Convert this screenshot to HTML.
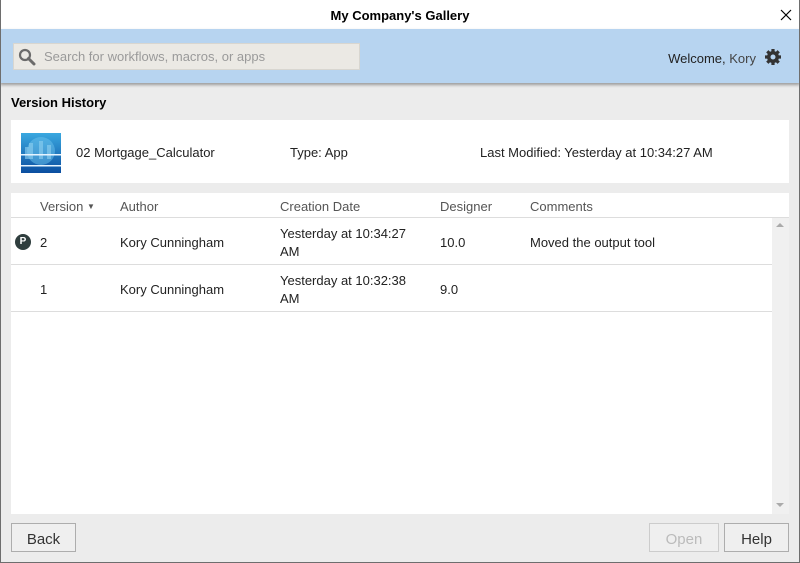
<!DOCTYPE html>
<html><head><style>
*{margin:0;padding:0;box-sizing:border-box}
body{width:800px;height:563px;overflow:hidden;font-family:"Liberation Sans",sans-serif;font-size:13px;color:#222;background:#ececec;position:relative}
.frame{position:absolute;left:0;top:0;width:800px;height:563px;border:1px solid #6e6e6e;border-top:none;pointer-events:none}
.abs{position:absolute}
.title{left:0;top:0;width:800px;height:29px;background:#fff;text-align:center;font-weight:bold;font-size:13px;line-height:32px;color:#000}
.hdr{left:0;top:29px;width:800px;height:54px;background:#b7d4f0;box-shadow:0 2px 3px rgba(0,0,0,.35)}
.search{left:13px;top:43px;width:347px;height:27px;background:#ebe9e4;border:1px solid #d8d6d0;color:#9a9a9a;font-size:13px;line-height:26px;padding-left:30px}
.card{background:#fff}
.th{color:#555;font-size:13px}
.row{color:#222;font-size:13px}
.btn{border:1px solid #adadad;background:#efefef;font-size:15px;text-align:center;line-height:31px;height:29px}
</style></head><body>
<div class="abs title">My Company's Gallery</div>
<svg class="abs" style="left:780px;top:9px" width="12" height="12"><path d="M1 1L11 11M11 1L1 11" stroke="#000" stroke-width="1.2"/></svg>
<div class="abs hdr"></div>
<div class="abs search">Search for workflows, macros, or apps</div>
<svg class="abs" style="left:18px;top:48px" width="18" height="18"><circle cx="7" cy="7" r="5" fill="none" stroke="#6b6b6b" stroke-width="2.2"/><path d="M10.5 10.5L16 16" stroke="#6b6b6b" stroke-width="3" stroke-linecap="round"/></svg>
<div class="abs" style="right:44px;top:51px;font-size:13px;color:#222">Welcome, <span style="color:#444">Kory</span></div>
<svg class="abs" style="left:764px;top:48px" width="18" height="18" viewBox="0 0 18 18"><g fill="#333"><circle cx="9" cy="9" r="6"/><g stroke="#333" stroke-width="3.2"><path d="M9 1v16M1 9h16M3.3 3.3l11.4 11.4M14.7 3.3L3.3 14.7"/></g></g><circle cx="9" cy="9" r="2.5" fill="#b7d4f0"/></svg>
<div class="abs" style="left:11px;top:95px;font-weight:bold;font-size:13px;color:#000">Version History</div>
<div class="abs card" style="left:11px;top:120px;width:778px;height:63px"></div>
<svg class="abs" style="left:21px;top:133px" width="40" height="40"><defs><linearGradient id="g" x1="0" y1="0" x2="0" y2="1"><stop offset="0" stop-color="#3aa8e0"/><stop offset="1" stop-color="#0b4ea0"/></linearGradient></defs><rect width="40" height="40" fill="url(#g)"/><circle cx="20" cy="18" r="14" fill="#6cc4ee" opacity=".5"/><path d="M4 26V14h4v-4h4v16M18 26V8h4v18M26 26V12h4v14" fill="#8fd0f0" opacity=".6"/><rect y="21" width="40" height="1.5" fill="#e6f4ff"/><rect y="32" width="40" height="1.5" fill="#e6f4ff"/></svg>
<div class="abs row" style="left:76px;top:145px">02 Mortgage_Calculator</div>
<div class="abs row" style="left:290px;top:145px">Type: App</div>
<div class="abs row" style="left:480px;top:145px">Last Modified: Yesterday at 10:34:27 AM</div>
<div class="abs card" style="left:11px;top:193px;width:778px;height:321px"></div>
<div class="abs" style="left:772px;top:218px;width:17px;height:296px;background:#f0f0f0"></div>
<div class="abs" style="left:776px;top:223px;width:0;height:0;border:4px solid transparent;border-bottom-color:#aaa;border-top:none"></div>
<div class="abs" style="left:776px;top:503px;width:0;height:0;border:4px solid transparent;border-top-color:#aaa;border-bottom:none"></div>
<div class="abs" style="left:11px;top:217px;width:778px;height:1px;background:#ddd"></div>
<div class="abs" style="left:11px;top:264px;width:761px;height:1px;background:#ddd"></div>
<div class="abs" style="left:11px;top:311px;width:761px;height:1px;background:#ddd"></div>
<div class="abs th" style="left:40px;top:199px">Version <span style="font-size:8px;vertical-align:2px">▼</span></div>
<div class="abs th" style="left:120px;top:199px">Author</div>
<div class="abs th" style="left:280px;top:199px">Creation Date</div>
<div class="abs th" style="left:440px;top:199px">Designer</div>
<div class="abs th" style="left:530px;top:199px">Comments</div>
<div class="abs" style="left:15px;top:234px;width:16px;height:16px;border-radius:50%;background:#2f3e3e;color:#fff;font-size:10px;font-weight:bold;text-align:center;line-height:16px">P</div>
<div class="abs row" style="left:40px;top:235px">2</div>
<div class="abs row" style="left:120px;top:235px">Kory Cunningham</div>
<div class="abs row" style="left:280px;top:225px;line-height:18px">Yesterday at 10:34:27<br>AM</div>
<div class="abs row" style="left:440px;top:235px">10.0</div>
<div class="abs row" style="left:530px;top:235px">Moved the output tool</div>
<div class="abs row" style="left:40px;top:282px">1</div>
<div class="abs row" style="left:120px;top:282px">Kory Cunningham</div>
<div class="abs row" style="left:280px;top:272px;line-height:18px">Yesterday at 10:32:38<br>AM</div>
<div class="abs row" style="left:440px;top:282px">9.0</div>
<div class="abs btn" style="left:11px;top:523px;width:65px;color:#333">Back</div>
<div class="abs btn" style="left:649px;top:523px;width:70px;color:#bbb;border-color:#ccc">Open</div>
<div class="abs btn" style="left:724px;top:523px;width:65px;color:#333">Help</div>
<div class="frame"></div>
</body></html>
